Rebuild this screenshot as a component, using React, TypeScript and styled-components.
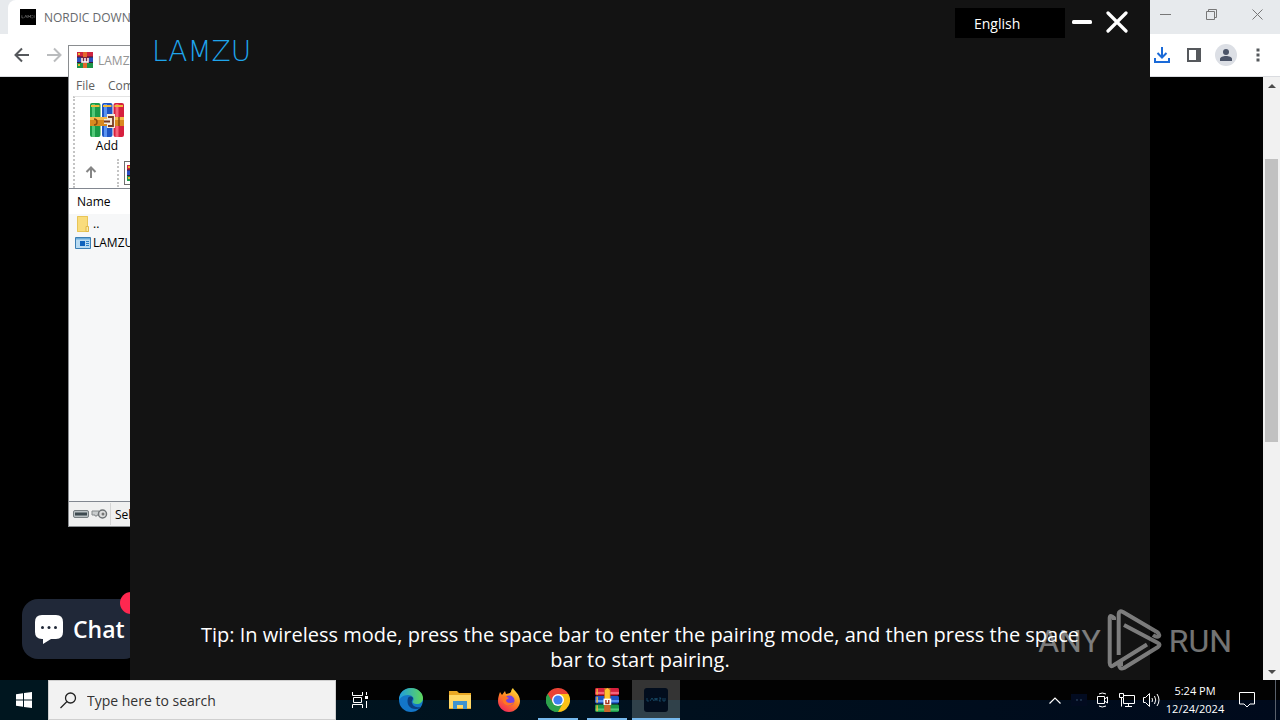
import React from 'react';
import styled, { createGlobalStyle } from 'styled-components';

const Global = createGlobalStyle`
  *, *::before, *::after { box-sizing: border-box; }
  html, body { margin: 0; padding: 0; }
  body { background: #000; font-family: "Open Sans", "Noto Sans", sans-serif; overflow: hidden; }
  button, input, select { font-family: inherit; margin: 0; padding: 0; border: 0; border-radius: 0; background: none; color: inherit; }
  svg { display: block; flex: none; }
`;

const Desktop = styled.div`
  display: flex;
  flex-direction: column;
  height: 100vh;
`;

const Workspace = styled.main`
  position: relative;
  flex: 1;
  min-height: 0;
  overflow: hidden;
`;

/* ---------- Browser ---------- */

const Browser = styled.section`
  display: flex;
  flex-direction: column;
  height: 100%;
  background: #000;
`;

const TabStrip = styled.div`
  display: flex;
  flex: none;
  justify-content: space-between;
  height: 34px;
  padding-left: 8px;
  background: #e7eaed;
`;

const Tab = styled.div`
  display: flex;
  align-items: center;
  gap: 8px;
  width: 240px;
  padding: 0 12px;
  overflow: hidden;
  white-space: nowrap;
  border-radius: 8px 8px 0 0;
  background: #fff;
  color: #66696d;
  font-size: 12px;
`;

const SiteBadge = styled.span`
  display: flex;
  align-items: center;
  justify-content: center;
  width: 16px;
  height: 16px;
  background: #000;
`;

const CaptionButtons = styled.div`
  display: flex;
  height: 28px;
`;

const CaptionButton = styled.button`
  display: flex;
  align-items: center;
  justify-content: center;
  width: 46px;
`;

const BrowserBar = styled.div`
  display: flex;
  flex: none;
  justify-content: space-between;
  align-items: center;
  height: 43px;
  padding: 0 6px;
  background: #fff;
  border-bottom: 1px solid #dadce0;
`;

const BarGroup = styled.div`
  display: flex;
  align-items: center;
`;

const BarButton = styled.button`
  display: flex;
  align-items: center;
  justify-content: center;
  width: 32px;
  height: 32px;
`;

const PageArea = styled.div`
  display: flex;
  flex: 1;
  min-height: 0;
`;

const PageBody = styled.div`
  position: relative;
  flex: 1;
`;

const ChatButton = styled.button`
  position: absolute;
  left: 22px;
  bottom: 21px;
  display: flex;
  align-items: center;
  gap: 9px;
  width: 118px;
  height: 60px;
  padding-left: 12px;
  border-radius: 16px;
  background: #202838;
  color: #fff;
  font-size: 23px;
  font-weight: 600;
`;

const ChatCount = styled.span`
  position: absolute;
  top: -7px;
  right: -2px;
  width: 22px;
  height: 22px;
  border-radius: 50%;
  background: #ff2850;
`;

const Scrollbar = styled.div`
  display: flex;
  flex-direction: column;
  width: 17px;
  background: #f1f1f1;
`;

const ScrollArrow = styled.button`
  display: flex;
  align-items: center;
  justify-content: center;
  height: 17px;
`;

const ScrollSpace = styled.div<{ $share: number }>`
  flex: ${(p) => p.$share};
`;

const ScrollThumb = styled.div`
  flex: 284;
  margin: 0 2px;
  background: #c1c1c1;
`;

/* ---------- Archive manager ---------- */

const Archive = styled.section`
  position: absolute;
  left: 68px;
  top: 45px;
  display: flex;
  flex-direction: column;
  width: 640px;
  height: 482px;
  border: 1px solid #8a8d90;
  background: #fff;
  color: #000;
  font-size: 12px;
`;

const ArchiveTitle = styled.header`
  display: flex;
  align-items: center;
  gap: 5px;
  height: 28px;
  padding-left: 8px;
  color: #949494;
`;

const ArchiveMenu = styled.nav`
  display: flex;
  align-items: center;
  gap: 13px;
  height: 22px;
  padding-left: 7px;
  color: #606060;
`;

const MenuButton = styled.button`
  font-size: 12px;
`;

const ArchiveTools = styled.div`
  display: flex;
  flex-direction: column;
  height: 92px;
  margin-left: 4px;
  border-top: 1px solid #e4e4e4;
  border-left: 2px dotted #c4c4c4;
`;

const ToolButton = styled.button`
  display: flex;
  flex-direction: column;
  align-items: center;
  width: 64px;
  height: 62px;
  padding-top: 6px;
  font-size: 12px;
  line-height: 18px;
`;

const PathRow = styled.div`
  display: flex;
  align-items: center;
  height: 28px;
  padding-left: 8px;
`;

const UpButton = styled.button`
  width: 16px;
  height: 16px;
`;

const PathGrip = styled.span`
  height: 28px;
  margin: 0 5px 0 18px;
  border-left: 2px dotted #c4c4c4;
`;

const PathBox = styled.div`
  display: flex;
  align-items: center;
  flex: 1;
  height: 24px;
  padding-left: 2px;
  border: 1px solid #6f6f6f;
`;

const FilePane = styled.div`
  flex: 1;
  border-top: 1px solid #828790;
  border-bottom: 1px solid #828790;
  background: #f6f7f8;
`;

const FileTable = styled.table`
  width: 100%;
  border-collapse: collapse;
  th { height: 25px; padding: 0 0 0 8px; background: #fff; font-weight: 400; text-align: left; }
  td { height: 19px; padding: 0 0 0 6px; }
`;

const FileCell = styled.div`
  display: flex;
  align-items: center;
  gap: 2px;
  line-height: 18px;
`;

const StatusBar = styled.footer`
  display: flex;
  align-items: center;
  gap: 2px;
  height: 24px;
  padding-left: 4px;
  background: #f0f0f0;
`;

const StatusText = styled.span`
  height: 22px;
  padding: 3px 0 0 4px;
  border-left: 1px solid #d5d5d5;
`;

/* ---------- Mouse driver window ---------- */

const Driver = styled.section`
  position: absolute;
  top: 0;
  bottom: 0;
  left: 130px;
  right: 130px;
  display: flex;
  flex-direction: column;
  justify-content: space-between;
  background: #131313;
  color: #fff;
`;

const DriverHeader = styled.header`
  display: flex;
  justify-content: space-between;
  align-items: flex-start;
  padding: 8px 22px 0 22px;
`;

const Brand = styled.h1`
  margin: 28px 0 0;
  color: #1fa5ec;
  font-family: "DejaVu Sans", sans-serif;
  font-size: 28px;
  font-weight: 200;
  line-height: 32px;
`;

const DriverControls = styled.div`
  display: flex;
  align-items: center;
`;

const Language = styled.select`
  width: 110px;
  height: 30px;
  margin-right: 7px;
  padding-left: 19px;
  appearance: none;
  background: #000;
  color: #fff;
  font-size: 14px;
`;

const DriverButton = styled.button`
  width: 20px;
  height: 28px;
  & + & { width: 22px; margin-left: 14px; }
`;

const Tip = styled.p`
  align-self: center;
  max-width: 900px;
  margin: 0;
  padding-bottom: 8px;
  font-size: 20px;
  line-height: 25px;
  text-align: center;
`;

const Watermark = styled.div`
  position: absolute;
  right: 48px;
  bottom: 6px;
  display: flex;
  align-items: center;
  gap: 6px;
  color: #fff;
  opacity: 0.45;
  font-family: Roboto, sans-serif;
  font-size: 32px;
  font-weight: 400;
  line-height: 66px;
  pointer-events: none;
`;

/* ---------- Taskbar ---------- */

const Taskbar = styled.footer`
  display: flex;
  flex: none;
  height: 40px;
  background: linear-gradient(#020202 50%, transparent 50%), linear-gradient(90deg, #001720, #000a1c);
  color: #fff;
`;

const StartButton = styled.button`
  display: flex;
  align-items: center;
  justify-content: center;
  width: 48px;
  background: #00161f;
`;

const SearchBox = styled.label`
  display: flex;
  align-items: center;
  gap: 10px;
  width: 288px;
  padding-left: 11px;
  border: 1px solid #cfcfcf;
  background: #f2f2f2;
  color: #222;
`;

const SearchInput = styled.input`
  flex: 1;
  min-width: 0;
  outline: 0;
  font-size: 14px;
  &::placeholder { color: #333; opacity: 1; }
`;

const TaskList = styled.div`
  display: flex;
  gap: 1px;
  margin-left: 3px;
`;

const TaskButton = styled.button<{ $state?: 'open' | 'active' }>`
  display: flex;
  flex-direction: column;
  align-items: center;
  justify-content: center;
  width: 48px;
  height: 40px;
  background: ${(p) => (p.$state === 'active' ? 'linear-gradient(#343434 50%, #30414a 50%)' : 'none')};
  &::after {
    content: "";
    display: ${(p) => (p.$state ? 'block' : 'none')};
    width: ${(p) => (p.$state === 'active' ? '48px' : '40px')};
    height: 2px;
    margin: 6px 0 -8px;
    background: #76b9ed;
  }
`;

const Tray = styled.div`
  display: flex;
  align-items: center;
  margin-left: auto;
`;

const TrayButton = styled.button<{ $wide?: boolean }>`
  display: flex;
  align-items: center;
  justify-content: center;
  width: ${(p) => (p.$wide ? '40px' : '24px')};
  height: 40px;
`;

const Clock = styled.div`
  width: 64px;
  font-size: 11px;
  line-height: 18px;
  text-align: center;
  white-space: nowrap;
`;

const ShowDesktop = styled.button`
  width: 5px;
  height: 40px;
  margin-left: 8px;
  border-left: 1px solid #59606b;
`;

/* ---------- Drawings ---------- */

const Books = ({ size, wide }: { size: number; wide?: boolean }) => (
  <svg width={size} height={size} viewBox="0 0 34 34" aria-hidden="true">
    <g transform={wide ? 'rotate(-90 17 17)' : undefined}>
      <rect x="0" width="10.500" height="34" rx="2" fill="#1b9a48" />
      <rect x="2" y="1" width="3" height="33" fill="#52c878" />
      <rect x="12" width="10.500" height="34" rx="2" fill="#1e55c4" />
      <rect x="14" y="1" width="3" height="33" fill="#5a93f0" />
      <rect x="23.500" width="10.500" height="34" rx="2" fill="#d6203e" />
      <rect x="25.500" y="1" width="3" height="33" fill="#f4657b" />
      <path d="M1 2h8.500v2H1zM13 2h8.500v2H13zM24.500 2H33v2h-8.500z" fill="#f0b83a" />
    </g>
    {wide ? (
      <>
        <path d="M13 0h9v34h-9z" fill="#c9652a" />
        <path d="M14 3l3.500-3L21 3v13h-7z" fill="#ffc52e" />
        <path d="M12 15h11v9H12z" fill="#fff" />
        <path d="M15.500 17v5h4v-5" stroke="#a3301c" strokeWidth="2" fill="none" />
      </>
    ) : (
      <>
        <path d="M0 14h34v9H0z" fill="#d98a20" />
        <path d="M0 14h34v3H0z" fill="#f5bc4e" />
        <path d="M4 16q3 0 3 3t-3 3M29 14v9" stroke="#8d4c0c" strokeWidth="1.500" fill="none" />
        <path d="M17 11h8v14h-8v-4h-3v-5h3z" fill="#f3ead9" />
        <path d="M14 18.500h6M18 14h5v9h-5" stroke="#7a3a20" strokeWidth="1.800" fill="none" />
      </>
    )}
  </svg>
);

const WinrarSmall = () => (
  <svg width="16" height="16" viewBox="0 0 16 16" aria-hidden="true">
    <path d="M0 0h16v5H0z" fill="#cf2440" />
    <path d="M0 5h16v5H0z" fill="#2a4fc0" />
    <path d="M0 10h16v6H0z" fill="#1d9447" />
    <path d="M0 4.500h16v1H0zM0 10h16v1H0z" fill="#3a1830" />
    <path d="M1 1h2v2H1zM1 12h2v2H1z" fill="#e9b52f" />
    <path d="M6 0h4v16H6z" fill="#e2682c" />
    <path d="M4 5h8v6H4z" fill="#7b2340" />
    <path d="M5 6v4h6V6M8 6v4" stroke="#fff" strokeWidth="1.500" fill="none" />
  </svg>
);

const DotsWord = ({ w, color }: { w: number; color: string }) => (
  <svg width={w} height="4" viewBox="0 0 16 4" aria-hidden="true">
    <path d="M1 0v3h2M4 3l1.500-3L7 3M8 3V0l1.500 2L11 0v3M12 0h1.500M12 3h1.500M15 0v3" stroke={color} strokeWidth=".6" fill="none" />
  </svg>
);

const WatermarkPlay = () => (
  <svg width="56" height="64" viewBox="0 0 56 64" aria-hidden="true">
    <g fill="none" stroke="#fff" strokeWidth="4" strokeLinejoin="round">
      <path d="M7 11V9Q3 5 2.700 9V54Q3 59 7 56L40 35.500" />
      <path d="M11.700 46V5Q12 1 16 3L50 23Q53 25 52 27Q50 29 46 26" />
      <path d="M17 16L51 34Q54 35.500 51 38L17 59Q12 61 12 55H16" />
    </g>
  </svg>
);

export default function App() {
  return (
    <Desktop>
      <Global />
      <Workspace>
        <Browser>
          <TabStrip>
            <Tab>
              <SiteBadge><DotsWord w={14} color="#999" /></SiteBadge>
              <span>NORDIC DOWNLOADS</span>
            </Tab>
            <CaptionButtons>
              <CaptionButton aria-label="Minimize browser">
                <svg width="11" height="11" viewBox="0 0 11 11"><path d="M0 5.500h11" stroke="#777" /></svg>
              </CaptionButton>
              <CaptionButton aria-label="Restore browser">
                <svg width="11" height="11" viewBox="0 0 11 11"><path d="M.5 2.500h8v8h-8zM2.500 2.500v-2h8v8h-2" stroke="#777" fill="none" /></svg>
              </CaptionButton>
              <CaptionButton aria-label="Close browser">
                <svg width="11" height="11" viewBox="0 0 11 11"><path d="M.5.5l10 10M10.500.5l-10 10" stroke="#777" /></svg>
              </CaptionButton>
            </CaptionButtons>
          </TabStrip>
          <BrowserBar>
            <BarGroup>
              <BarButton aria-label="Back">
                <svg width="16" height="16" viewBox="0 0 16 16"><path d="M15 8H2M8 1.500L1.500 8 8 14.500" stroke="#55585c" strokeWidth="2" fill="none" /></svg>
              </BarButton>
              <BarButton aria-label="Forward">
                <svg width="16" height="16" viewBox="0 0 16 16"><path d="M1 8h13M8 1.500L14.500 8 8 14.500" stroke="#babcbe" strokeWidth="2" fill="none" /></svg>
              </BarButton>
            </BarGroup>
            <BarGroup>
              <BarButton aria-label="Downloads">
                <svg width="18" height="18" viewBox="0 0 18 18"><path d="M9 1v10M4.500 7L9 11.500 13.500 7M2 12v4h14v-4" stroke="#1a6ad8" strokeWidth="2" fill="none" /></svg>
              </BarButton>
              <BarButton aria-label="Side panel">
                <svg width="14" height="14" viewBox="0 0 14 14"><path d="M1 1h12v12H1z" stroke="#55585c" strokeWidth="2" fill="none" /><path d="M9 1h4v12H9z" fill="#55585c" /></svg>
              </BarButton>
              <BarButton aria-label="Profile">
                <svg width="22" height="22" viewBox="0 0 22 22"><circle cx="11" cy="11" r="11" fill="#dcdfe5" /><circle cx="11" cy="8" r="3" fill="#4b5468" /><path d="M5 17v-2c0-4 12-4 12 0v2z" fill="#4b5468" /></svg>
              </BarButton>
              <BarButton aria-label="Menu">
                <svg width="4" height="14" viewBox="0 0 4 14"><path d="M.5.5h3v3h-3zM.5 5.500h3v3h-3zM.5 10.500h3v3h-3z" fill="#55585c" /></svg>
              </BarButton>
            </BarGroup>
          </BrowserBar>
          <PageArea>
            <PageBody>
              <ChatButton>
                <svg width="30" height="30" viewBox="0 0 30 30" aria-hidden="true">
                  <path d="M8 1h14q7 0 7 7v10q0 7-7 7h-5l-8 5v-5H8q-7 0-7-7V8q0-7 7-7z" fill="#fff" />
                  <circle cx="8.500" cy="13.500" r="1.500" fill="#202838" /><circle cx="15" cy="13.500" r="1.500" fill="#202838" /><circle cx="21.500" cy="13.500" r="1.500" fill="#202838" />
                </svg>
                Chat
                <ChatCount />
              </ChatButton>
            </PageBody>
            <Scrollbar>
              <ScrollArrow aria-label="Scroll up"><svg width="8" height="4" viewBox="0 0 8 4"><path d="M0 4l4-4 4 4z" fill="#4c4c4c" /></svg></ScrollArrow>
              <ScrollSpace $share={65} />
              <ScrollThumb />
              <ScrollSpace $share={221} />
              <ScrollArrow aria-label="Scroll down"><svg width="8" height="4" viewBox="0 0 8 4"><path d="M0 0l4 4 4-4z" fill="#4c4c4c" /></svg></ScrollArrow>
            </Scrollbar>
          </PageArea>
        </Browser>

        <Archive>
          <ArchiveTitle><WinrarSmall /><span>LAMZU</span></ArchiveTitle>
          <ArchiveMenu><MenuButton>File</MenuButton><MenuButton>Commands</MenuButton></ArchiveMenu>
          <ArchiveTools>
            <ToolButton><Books size={34} />Add</ToolButton>
            <PathRow>
              <UpButton aria-label="Up one level">
                <svg width="16" height="16" viewBox="0 0 16 16"><path d="M8 13V3M3.500 7L8 2.500 12.500 7" stroke="#858585" strokeWidth="2" fill="none" /></svg>
              </UpButton>
              <PathGrip />
              <PathBox><WinrarSmall /></PathBox>
            </PathRow>
          </ArchiveTools>
          <FilePane>
            <FileTable>
              <thead><tr><th scope="col">Name</th></tr></thead>
              <tbody>
                <tr><td><FileCell>
                  <svg width="16" height="16" viewBox="0 0 16 16"><path d="M2 0h11v11h1v5H2z" fill="#f9dc7c" /><path d="M2.500.5h10v15h-10z" fill="none" stroke="#e8c558" /><path d="M11 10.500h2.500v5H11z" fill="#fbe9a8" stroke="#e0b848" /></svg>
                  ..
                </FileCell></td></tr>
                <tr><td><FileCell>
                  <svg width="16" height="12" viewBox="0 0 16 12"><path d="M.5.5h15v11H.5z" fill="#b9dbf2" stroke="#3b7fb5" /><path d="M1 1h14v1.500H1z" fill="#6cabd8" /><path d="M5 4h5v5H5z" fill="#0e62bd" /><path d="M11 4.500h3M11 6.500h3M11 8.500h3" stroke="#2e7fc4" /></svg>
                  LAMZU
                </FileCell></td></tr>
              </tbody>
            </FileTable>
          </FilePane>
          <StatusBar>
            <svg width="16" height="8" viewBox="0 0 16 8"><rect x=".5" y=".5" width="15" height="7" rx="1.500" fill="#b8bfc2" stroke="#767d80" /><path d="M2 2.500h12v3H2z" fill="#3e4a50" /></svg>
            <svg width="17" height="12" viewBox="0 0 17 12"><path d="M1 3h7v4H6v1H4V7H1z" fill="#c9cccd" stroke="#85898b" /><circle cx="11.500" cy="6" r="4" fill="#ddd" stroke="#6f7376" strokeWidth="1.500" /><circle cx="12" cy="6" r="1.500" fill="#777" /></svg>
            <StatusText>Selected</StatusText>
          </StatusBar>
        </Archive>

        <Driver>
          <DriverHeader>
            <Brand>LAMZU</Brand>
            <DriverControls>
              <Language aria-label="Language" defaultValue="English"><option>English</option></Language>
              <DriverButton aria-label="Minimize">
                <svg width="20" height="28" viewBox="0 0 20 28"><rect y="11" width="20" height="4" rx="1.500" fill="#fff" /></svg>
              </DriverButton>
              <DriverButton aria-label="Close">
                <svg width="22" height="28" viewBox="0 0 22 28"><path d="M2 4l18 18M20 4L2 22" stroke="#fff" strokeWidth="3.200" strokeLinecap="round" /></svg>
              </DriverButton>
            </DriverControls>
          </DriverHeader>
          <Tip>Tip: In wireless mode, press the space bar to enter the pairing mode, and then press the space bar to start pairing.</Tip>
        </Driver>

        <Watermark><span>ANY</span><WatermarkPlay /><span>RUN</span></Watermark>
      </Workspace>

      <Taskbar>
        <StartButton aria-label="Start">
          <svg width="16" height="16" viewBox="0 0 16 16"><path d="M0 2.300L7 1.300V7.500H0zM8 1.100L16 0V7.500H8zM0 8.500H7V14.700L0 13.700zM8 8.500H16V16L8 14.900z" fill="#fff" /></svg>
        </StartButton>
        <SearchBox>
          <svg width="17" height="17" viewBox="0 0 17 17"><circle cx="10.500" cy="6" r="5" stroke="#222" strokeWidth="1.300" fill="none" /><path d="M7 9.500L.5 16" stroke="#222" strokeWidth="1.300" /></svg>
          <SearchInput type="text" aria-label="Search" placeholder="Type here to search" />
        </SearchBox>
        <TaskButton aria-label="Task view">
          <svg width="16" height="16" viewBox="0 0 16 16"><path d="M.5 0v3.500h10V0M.5 16v-3.500h10V16M1.500 5.500h8v5h-8zM14.500 0v3M14.500 9v7" stroke="#fff" fill="none" /><path d="M13 4h3v3h-3z" fill="#fff" /></svg>
        </TaskButton>
        <TaskList>
          <TaskButton aria-label="Edge">
            <svg width="24" height="24" viewBox="0 0 24 24">
              <defs><linearGradient id="edgeTop" x1="0" x2="1"><stop offset="0" stopColor="#1e9be0" /><stop offset="1" stopColor="#5fd85a" /></linearGradient></defs>
              <circle cx="12" cy="12" r="12" fill="#1376c8" />
              <path d="M0 12C0 4 6 0 12 0c7 0 12 5 12 10 0 4-3 6-6 6s-5-1-4-3c2-3-1-6-5-6-5 0-8 3-9 5z" fill="url(#edgeTop)" />
              <path d="M9 10c-2 6 2 12 9 11 2 0 3-1 4-2-3 1-8 0-9-4-1-2 1-3 1-5-1-2-4-2-5 0z" fill="#0b3f80" />
            </svg>
          </TaskButton>
          <TaskButton aria-label="File Explorer">
            <svg width="22" height="18" viewBox="0 0 22 18"><path d="M0 0h8l2 2h12v16H0z" fill="#e9a825" /><path d="M0 4h22v13H0z" fill="#ffd867" /><path d="M4 10h14v8h-4v-4H8v4H4z" fill="#3f93cf" /></svg>
          </TaskButton>
          <TaskButton aria-label="Firefox">
            <svg width="24" height="24" viewBox="0 0 24 24">
              <defs><linearGradient id="fox" x1=".8" y1="0" x2=".2" y2="1"><stop offset="0" stopColor="#ffe13a" /><stop offset=".5" stopColor="#ff8020" /><stop offset="1" stopColor="#f02060" /></linearGradient></defs>
              <path d="M3 4l2 3 3-4 1 3c2 0 4-1 5-2 0-2 1-3 2-4 1 3 7 6 7 13 0 6-5 11-11 11S1 19 1 13c0-4 1-6 2-9z" fill="url(#fox)" />
              <circle cx="12.500" cy="12.500" r="5" fill="#7543e0" /><path d="M5 9c3-1 5 0 7 1l-3 2c0 3 5 4 8 2-2 5-9 4-11 0z" fill="#ff7424" />
            </svg>
          </TaskButton>
          <TaskButton $state="open" aria-label="Chrome">
            <svg width="24" height="24" viewBox="0 0 24 24">
              <path d="M12 12L1.600 6A12 12 0 0 1 22.400 6z" fill="#ea4335" /><path d="M12 12L22.400 6A12 12 0 0 1 12 24z" fill="#fbc116" /><path d="M12 12V24A12 12 0 0 1 1.600 6z" fill="#2da14c" />
              <path d="M12 6h10.400L17 15z" fill="#fbc116" /><path d="M1.600 6L7 15l5-9z" fill="#ea4335" /><path d="M6.800 15L1.600 6A12 12 0 0 0 12 24l5-9z" fill="#2da14c" />
              <circle cx="12" cy="12" r="6" fill="#fff" /><circle cx="12" cy="12" r="4.600" fill="#3d7ff0" />
            </svg>
          </TaskButton>
          <TaskButton $state="open" aria-label="WinRAR"><Books size={24} wide /></TaskButton>
          <TaskButton $state="active" aria-label="LAMZU driver">
            <svg width="24" height="24" viewBox="0 0 24 24"><rect width="24" height="24" rx="3" fill="#020d1d" /><path d="M3 10v3h2M6 13l2-3 2 3M11 13v-3l1 2 1-2v3M15 10h2l-2 3h2M19 10v3h2v-3" stroke="#19506e" strokeWidth=".8" fill="none" /></svg>
          </TaskButton>
        </TaskList>
        <Tray>
          <TrayButton aria-label="Show hidden icons"><svg width="12" height="7" viewBox="0 0 12 7"><path d="M.5 6.500L6 1l5.500 5.500" stroke="#fff" strokeWidth="1.200" fill="none" /></svg></TrayButton>
          <TrayButton aria-label="LAMZU"><svg width="16" height="12" viewBox="0 0 16 12"><path d="M0 0h16v12H0z" fill="#020b20" /><path d="M5 6h2M9 6h2" stroke="#35506a" /></svg></TrayButton>
          <TrayButton aria-label="Meet Now"><svg width="12" height="16" viewBox="0 0 12 16"><path d="M.5 4.500h7v7h-7zM7.500 7l3-2v6l-3-2M2 2q3-2 7 0M2 14q3 2 7 0" stroke="#fff" fill="none" /></svg></TrayButton>
          <TrayButton aria-label="Network"><svg width="16" height="14" viewBox="0 0 16 14"><path d="M5 2.500h10.500v8H4.500V5M.5.500h4v4h-4zM2.500 4.500v9M6 13.500h7M9.500 10.500v3" stroke="#fff" fill="none" /></svg></TrayButton>
          <TrayButton aria-label="Volume"><svg width="17" height="14" viewBox="0 0 17 14"><path d="M.5 4.500h2l4-4v13l-4-4h-2zM9 5q1 2 0 4M11.500 3q2.500 4 0 8M14 1q4 6 0 12" stroke="#fff" fill="none" /></svg></TrayButton>
          <Clock>5:24 PM<br />12/24/2024</Clock>
          <TrayButton $wide aria-label="Notifications"><svg width="16" height="16" viewBox="0 0 16 16"><path d="M.5.500h15v11.500H11l-3 3-3-3H.5z" stroke="#fff" fill="none" /></svg></TrayButton>
          <ShowDesktop aria-label="Show desktop" />
        </Tray>
      </Taskbar>
    </Desktop>
  );
}
